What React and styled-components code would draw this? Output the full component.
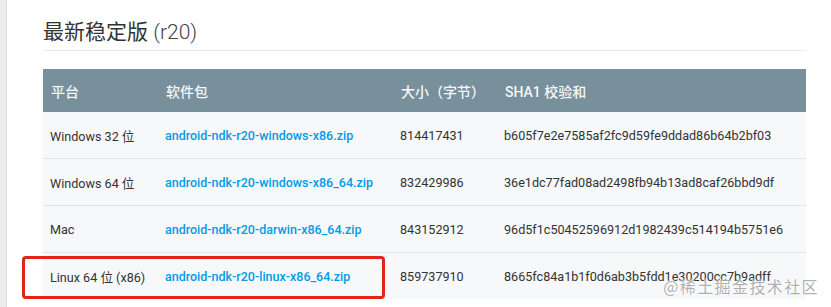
import React from 'react';
import styled, { createGlobalStyle } from 'styled-components';

const GlobalStyle = createGlobalStyle`
  html, body {
    margin: 0;
    padding: 0;
    background: #ffffff;
  }
  body {
    font-family: Roboto, "Noto Sans CJK SC", "Noto Sans", sans-serif;
  }
`;

const Page = styled.div`
  display: flex;
  width: 831px;
  height: 307px;
  overflow: hidden;
  position: relative;
`;

const SideStrip = styled.div`
  width: 6px;
  flex: none;
  background: #ececec;
  border-right: 1px solid #dedede;
`;

const Content = styled.div`
  flex: 1;
  padding: 0 25px 0 36px;
`;

const Title = styled.h2`
  margin: 18px 0 0;
  padding-bottom: 4px;
  font-size: 21px;
  line-height: 28px;
  font-weight: 400;
  color: #333;
  border-bottom: 1px solid #ebebeb;
  font-family: Roboto, "Noto Sans CJK SC", sans-serif;

  span {
    font-weight: 300;
    color: #444;
  }
`;

const Table = styled.div`
  margin-top: 18px;
`;

const cols = '115px 235px 104px 1fr';

const HeaderRow = styled.div`
  display: grid;
  grid-template-columns: ${cols};
  height: 43px;
  align-items: center;
  background: #78909c;
  color: #f4f6f7;
  font-size: 14px;
  font-weight: 500;
`;

const Row = styled.div`
  display: grid;
  grid-template-columns: ${cols};
  height: 46px;
  align-items: center;
  background: #f7f8fa;
  border-top: ${p => (p.$first ? 'none' : '1px solid #e2e4e6')};
  position: relative;

  ${p => p.$highlight && `
    &::after {
      content: '';
      position: absolute;
      left: -21px;
      top: 3px;
      bottom: 0;
      width: 363px;
      border: 3px solid #e3241c;
      border-radius: 4px;
      box-sizing: border-box;
    }
  `}
`;

const Cell = styled.div`
  padding-left: 7px;
  font-size: 12.6px;
  color: #333;
  white-space: nowrap;
`;

const HeadCell = styled.div`
  padding-left: 8px;
  white-space: nowrap;
`;

const FileLink = styled.a`
  color: #039be5;
  font-weight: 500;
  text-decoration: none;
  font-size: 12.5px;
`;

const Watermark = styled.div`
  position: absolute;
  right: 12px;
  bottom: 12px;
  font-size: 16px;
  line-height: 18px;
  color: rgba(150, 150, 150, 0.75);
  font-family: "Noto Sans CJK SC", sans-serif;
  text-shadow: 0 0 2px #fff, 0 0 2px #fff;
  letter-spacing: 1.4px;
`;

const rows = [
  ['Windows 32 位', 'android-ndk-r20-windows-x86.zip', '814417431', 'b605f7e2e7585af2fc9d59fe9ddad86b64b2bf03'],
  ['Windows 64 位', 'android-ndk-r20-windows-x86_64.zip', '832429986', '36e1dc77fad08ad2498fb94b13ad8caf26bbd9df'],
  ['Mac', 'android-ndk-r20-darwin-x86_64.zip', '843152912', '96d5f1c50452596912d1982439c514194b5751e6'],
  ['Linux 64 位 (x86)', 'android-ndk-r20-linux-x86_64.zip', '859737910', '8665fc84a1b1f0d6ab3b5fdd1e30200cc7b9adff'],
];

export default function App() {
  return (
    <>
      <GlobalStyle />
      <Page>
        <SideStrip />
        <Content>
          <Title>最新稳定版 <span>(r20)</span></Title>
          <Table>
            <HeaderRow>
              <HeadCell>平台</HeadCell>
              <HeadCell>软件包</HeadCell>
              <HeadCell>大小（字节）</HeadCell>
              <HeadCell>SHA1 校验和</HeadCell>
            </HeaderRow>
            {rows.map((r, i) => (
              <Row key={r[1]} $first={i === 0} $highlight={i === rows.length - 1}>
                <Cell>{r[0]}</Cell>
                <Cell><FileLink href="#">{r[1]}</FileLink></Cell>
                <Cell>{r[2]}</Cell>
                <Cell>{r[3]}</Cell>
              </Row>
            ))}
          </Table>
        </Content>
        <Watermark>@稀土掘金技术社区</Watermark>
      </Page>
    </>
  );
}
